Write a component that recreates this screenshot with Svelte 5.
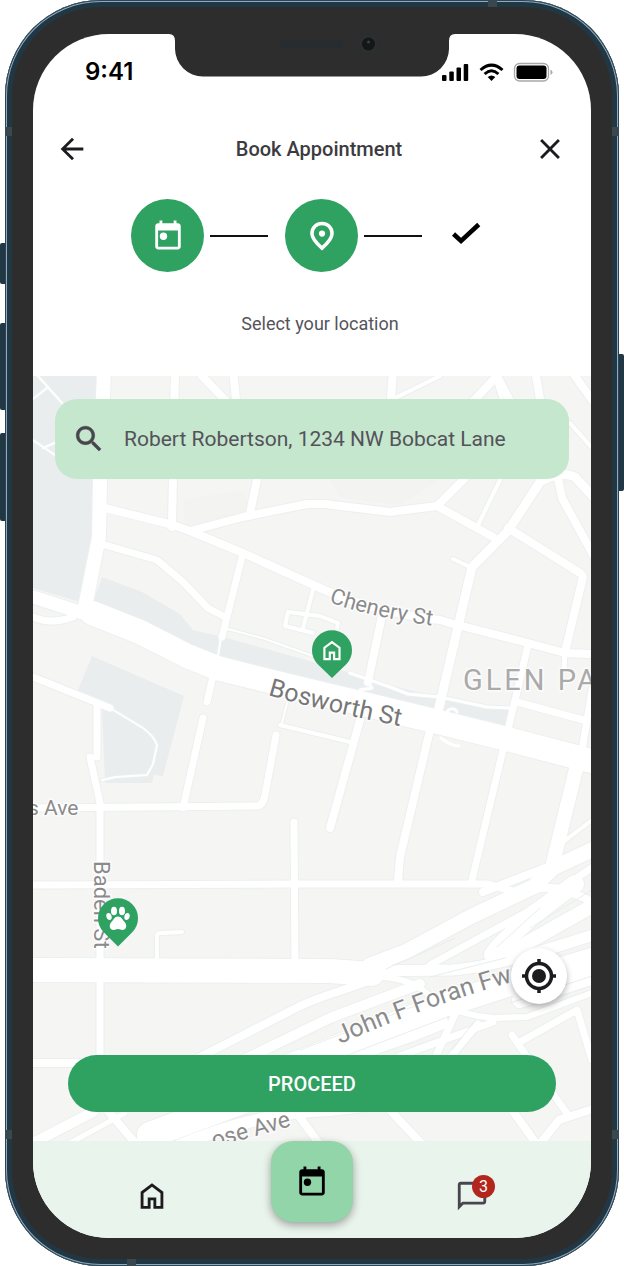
<script>
  const steps = [
    { id: 'date', label: 'Date', done: true },
    { id: 'place', label: 'Location', done: true },
    { id: 'confirm', label: 'Confirm', done: false }
  ];

  let address = $state('Robert Robertson, 1234 NW Bobcat Lane');

  // Parks and green strips, drawn beneath the streets.
  const parks = [
    'M33 376H97L93 530L80 602L33 588Z',
    'M102 577L142 592L180 614L193 630L227 638L313 662L350 673L390 685L440 698L487 708L512 709L507 730L430 716L297 686L217 665L140 630L92 606Z',
    'M92 656L184 696L163 776L154 775L152 783H105L102 707L78 690Z'
  ];

  // Street centre lines with their widths.
  const roads = [
    { w: 2, d: 'M38 376L62 403M47 388L33 399M33 440L55 455M43 448L57 442' },
    { w: 2, d: 'M221 637L217 662M228 629L262 638L313 656M287 703L282 723' },
    { w: 2, d: 'M110 708L143 728Q154 736 157 745L153 764L147 775L116 777L102 780' },
    { w: 3, d: 'M350 673L390 687L408 694L440 697L487 707L512 708M368 682L372 688L360 690L364 696' },
    { w: 4, d: 'M313 590L303 628M288 612L285 626L313 633M288 612L320 616L338 623L336 634' },
    { w: 4, d: 'M395 398L440 376M495 378L502 400M570 423L592 448M500 480L478 525M453 559L470 567' },
    { w: 4, d: 'M280 725L350 742M157 964V936Q157 933 161 933L182 932' },
    { w: 14, d: 'M104 370L100 480L99 537L85 607' },
    { w: 13, d: 'M33 597L92 616' },
    { w: 7, d: 'M33 617Q50 625 73 617' },
    { w: 24, d: 'M92 613L140 632L187 656L217 668L297 688L430 720L507 739L595 762' },
    { w: 8, d: 'M175 370L172 527M202 376L227 402M233 370L236 400M257 480L250 513' },
    { w: 8, d: 'M105 508L173 525L190 531L243 553L320 588Q372 612 440 620L450 623L528 643L565 653L592 654' },
    { w: 8, d: 'M190 531L243 517L307 504H325L390 512L437 506L493 537M437 506L463 480L520 420L497 376L463 412' },
    { w: 7, d: 'M105 545L157 560L183 582L208 608L225 617M242 557L222 637' },
    { w: 8, d: 'M393 370L391 399M535 370L540 399M575 376L592 400' },
    { w: 9, d: 'M596 500L575 477Q560 470 540 482L523 508L507 532L472 567L438 712' },
    { w: 8, d: 'M558 478L562 498L596 560M508 528L580 573Q584 576 582 581L565 652' },
    { w: 5, d: 'M565 650L564 670' },
    { w: 8, d: 'M382 616L368 682M360 720L330 828M430 730L400 857L398 882' },
    { w: 7, d: 'M503 750L472 880M528 645L508 730M517 702L587 721M592 690L582 750' },
    { w: 14, d: 'M577 765L553 863' },
    { w: 7, d: 'M213 676L207 702M203 718L183 808M276 735L265 795Q263 806 256 806L33 808' },
    { w: 7, d: 'M33 677L110 708M97 707V757M90 757L100 803V1060M294 822L295 970' },
    { w: 7, d: 'M33 885L295 884H487L520 893' },
    { w: 8, d: 'M33 1063H92' },
    { w: 24, d: 'M33 970L330 971L372 974' },
    { w: 15, d: 'M370 965L405 952L470 917L533 887L553 868L600 846' },
    { w: 8, d: 'M483 892L545 868M533 890Q555 882 592 902' },
    { w: 4, d: 'M558 846L592 820' },
    { w: 7, d: 'M430 965L527 912L600 862' },
    { w: 18, d: 'M493 955Q500 942 553 900L575 884' },
    { w: 14, d: 'M500 958L596 904' },
    { w: 11, d: 'M360 971L453 970Q500 966 596 934' },
    { w: 8, d: 'M200 1057L300 1006Q318 998 340 991L380 977' },
    { w: 10, d: 'M235 1064L330 1018L420 984' },
    { w: 24, d: 'M290 1066L430 1010L510 984L600 958' },
    { w: 16, d: 'M330 1062L410 1034L440 1022M520 1000L600 974' },
    { w: 6, d: 'M372 976Q410 978 425 992Q450 1014 493 1018L527 1017L600 990' },
    { w: 7, d: 'M400 1056L493 1022M448 1060L478 1024M456 1012L436 1056' },
    { w: 7, d: 'M512 1035L527 1057L568 1115M520 1042L577 1010L592 1060' },
    { w: 8, d: 'M596 1108L559 1120L539 1145M505 1100L535 1142M385 1105L420 1142' },
    { w: 10, d: 'M33 1143L93 1112' },
    { w: 5, d: 'M70 1143L125 1113' },
    { w: 26, d: 'M150 1135L250 1098L320 1085' },
    { w: 12, d: 'M180 1145Q260 1112 330 1110L380 1104' },
    { w: 8, d: 'M108 1111L137 1145M293 1108L318 1142' }
  ];
</script>

{#snippet calendarIcon()}
  <svg class="icon" viewBox="0 0 24 24" aria-hidden="true">
    <path d="M5 21.5q-.8 0-1.400-.6T3 19.500V5q0-.8.6-1.400T5 3h1V1h2v2h8V1h2v2h1q.8 0 1.400.6T21 5v14.500q0 .8-.6 1.400t-1.400.6H5Zm0-2h14V8.200H5v11.300Z" />
    <circle cx="8.800" cy="12.200" r="2.600" />
  </svg>
{/snippet}

{#snippet homeShape()}
  <path d="M6 19h3v-6h6v6h3v-9l-6-4.500L6 10v9Zm-2 2V9l8-6 8 6v12h-7v-6h-2v6H4Z" />
{/snippet}

<div class="stage">
  <div class="phone">
    <span class="key left k1"></span>
    <span class="key left k2"></span>
    <span class="key left k3"></span>
    <span class="key right"></span>
    <span class="band b1"></span>
    <span class="band b2"></span>
    <span class="band b3"></span>
    <span class="band b4"></span>
    <span class="band flat b5"></span>
    <span class="band flat b6"></span>

    <main class="screen">
      <svg class="notch" viewBox="0 0 286 43" aria-hidden="true">
        <path d="M0-1H286V0Q280 0 280 7V15A28 28 0 0 1 252 42.500H34A28 28 0 0 1 6 15V7Q6 0 0 0Z" fill="#2d2d2d" />
        <rect x="111" y="6" width="63" height="8" rx="4" fill="#262c2f" />
        <circle cx="199.500" cy="10" r="10" fill="#2a2f31" />
        <circle cx="199.500" cy="10" r="6.500" fill="#151717" />
        <circle cx="199.500" cy="8" r="1.500" fill="#3c4143" />
      </svg>

      <div class="status">
        <span class="time">9:41</span>
        <svg class="signals" viewBox="0 0 111 20" aria-label="Signal, Wi-Fi and battery">
          <rect x="0" y="13" width="4.500" height="6" rx="1" />
          <rect x="7.300" y="9.500" width="4.500" height="9.500" rx="1" />
          <rect x="14.500" y="5.500" width="4.500" height="13.500" rx="1" />
          <rect x="21.700" y="2" width="4.500" height="17" rx="1" />
          <g fill="none" stroke="#000" stroke-width="3">
            <path d="M38.500 8Q49.500-1.800 60.500 8" />
            <path d="M42.600 12Q49.500 5.600 56.400 12" />
          </g>
          <path d="M45.700 15Q49.500 11.800 53.300 15L49.500 19Z" />
          <rect x="72.500" y="1.500" width="34" height="17.500" rx="5" fill="none" stroke="#a8a8a8" stroke-width="1.300" />
          <rect x="74.500" y="3.500" width="30" height="13.500" rx="3" />
          <path d="M108.500 7.500Q110.500 8.500 110.500 10.200T108.500 13Z" fill="#a8a8a8" />
        </svg>
      </div>

      <header class="bar">
        <button class="plain" aria-label="Back">
          <svg class="icon" viewBox="0 0 24 24"><path d="M20 11H7.830l5.590-5.590L12 4l-8 8 8 8 1.410-1.410L7.830 13H20z" /></svg>
        </button>
        <h1>Book Appointment</h1>
        <button class="plain" aria-label="Close">
          <svg class="icon" viewBox="0 0 24 24"><path d="M19 6.410 17.590 5 12 10.590 6.410 5 5 6.410 10.590 12 5 17.590 6.410 19 12 13.410 17.590 19 19 17.590 13.410 12z" /></svg>
        </button>
      </header>

      <ol class="steps">
        {#each steps as step (step.id)}
          <li class:done={step.done} aria-label={step.label}>
            <span class="dot">
              {#if step.id === 'date'}
                {@render calendarIcon()}
              {:else if step.id === 'place'}
                <svg class="icon" viewBox="0 0 24 24" aria-hidden="true">
                  <path d="M12 3.200C8.200 3.200 4.900 6 4.900 10.200c0 3 2.400 6.200 7.100 10.300 4.700-4.100 7.100-7.300 7.100-10.300C19.100 6 15.800 3.200 12 3.200Z" fill="none" stroke="currentColor" stroke-width="2.500" />
                  <circle cx="12" cy="10.300" r="2.200" />
                </svg>
              {:else}
                <svg class="icon" viewBox="0 0 24 24" aria-hidden="true">
                  <path d="M3.200 10.600L8.500 15.500L21 3.900" fill="none" stroke="currentColor" stroke-width="3.200" />
                </svg>
              {/if}
            </span>
          </li>
        {/each}
      </ol>
      <p class="caption">Select your location</p>

      <section class="map" aria-label="Map">
        <svg class="tiles" viewBox="33 376 558 765" preserveAspectRatio="xMidYMid slice">
          <defs>
            <path id="chenery" d="M329 602Q372 618 450 628" />
            <path id="bosworth" d="M268 695Q330 713 420 730" />
            <path id="foran" d="M340 1044Q430 1004 530 977" />
          </defs>
          <rect x="33" y="376" width="559" height="765" fill="#f5f5f4" />
          <path d="M183 500L243 490L250 512L185 526ZM330 480H440L400 505L340 498Z" fill="#f3f3f2" />
          {#each parks as d}
            <path {d} fill="#eaeded" />
          {/each}
          <g fill="none" stroke-linecap="round" stroke-linejoin="round">
            {#each roads as road}
              <path d={road.d} stroke="#ebf0ef" stroke-width={road.w + 2} />
            {/each}
            {#each roads as road}
              <path d={road.d} stroke="#fff" stroke-width={road.w} />
            {/each}
            <path d="M447 714a5 4 0 1 1 10 -2M441 738q10 8 18 8" stroke="#fff" stroke-width="3" />
            <path d="M386 969L455 938M497 947L540 908M430 977L505 958M300 1050L420 1004M340 1058L450 1016M510 1003L592 976M530 928L592 890M452 1050L474 1022" stroke="#e9eeed" stroke-width="1" />
          </g>
          <g class="streets">
            <text font-size="22"><textPath href="#chenery">Chenery St</textPath></text>
            <text class="main-street" font-size="25"><textPath href="#bosworth">Bosworth St</textPath></text>
            <text font-size="25"><textPath href="#foran">John F Foran Fw</textPath></text>
            <text font-size="21" x="28" y="815">s Ave</text>
            <text font-size="22" transform="translate(94 861) rotate(90)">Baden St</text>
            <text font-size="23" transform="translate(214 1148) rotate(-16)">ose Ave</text>
            <text class="district" font-size="29" x="463" y="690">GLEN PA</text>
          </g>
          <g transform="translate(332 650)">
            <path class="pin" d="M0 28L-14.500 14A20 20 0 1 1 14.500 14Z" />
            <g transform="translate(-13 -12.500) scale(1.080)" fill="#fff">{@render homeShape()}</g>
          </g>
          <g transform="translate(118 918)">
            <path class="pin" d="M0 28.500L-14.500 14A20 20 0 1 1 14.500 14Z" />
            <g fill="#fff">
              <ellipse cx="-4" cy="-7" rx="3" ry="4.300" />
              <ellipse cx="4" cy="-7" rx="3" ry="4.300" />
              <ellipse cx="-9" cy="-1.500" rx="2.600" ry="3.600" transform="rotate(-15 -9 -1.500)" />
              <ellipse cx="9" cy="-1.500" rx="2.600" ry="3.600" transform="rotate(15 9 -1.500)" />
              <path d="M0-1.500C3.500-1.500 4.500 2 7 4.500C9.500 7.500 8 12 4.500 12C2.500 12 2 11 0 11S-2.500 12-4.500 12C-8 12-9.500 7.500-7 4.500C-4.500 2-3.500-1.500 0-1.500Z" />
            </g>
          </g>
        </svg>

        <label class="search">
          <svg class="icon" viewBox="0 0 24 24" aria-hidden="true"><path d="M15.500 14h-.79l-.28-.27C15.410 12.590 16 11.110 16 9.500 16 5.910 13.090 3 9.500 3S3 5.910 3 9.500 5.910 16 9.500 16c1.610 0 3.090-.59 4.230-1.570l.27.28v.79l5 4.990L20.490 19l-4.990-5zm-6 0C7.010 14 5 11.990 5 9.500S7.010 5 9.500 5 14 7.010 14 9.500 11.990 14 9.500 14z" stroke="currentColor" stroke-width=".4" /></svg>
          <input type="text" aria-label="Your location" bind:value={address} />
        </label>

        <button class="locate" aria-label="Use my location">
          <svg class="icon" viewBox="0 0 34 34">
            <circle cx="17" cy="17" r="12.500" fill="none" stroke="currentColor" stroke-width="3.500" />
            <circle cx="17" cy="17" r="7" />
            <path d="M17 0V5M17 29V34M0 17H5M29 17H34" stroke="currentColor" stroke-width="3.500" />
          </svg>
        </button>

        <button class="proceed">PROCEED</button>
      </section>

      <nav class="tabs">
        <a href="#home" aria-label="Home"><svg class="icon" viewBox="0 0 24 24">{@render homeShape()}</svg></a>
        <a class="current" href="#appointments" aria-label="Appointments">{@render calendarIcon()}</a>
        <a class="chat" href="#messages" aria-label="Messages">
          <svg class="icon" viewBox="0 0 24 24"><path d="M20 2H4c-1.100 0-2 .9-2 2v18l4-4h14c1.100 0 2-.9 2-2V4c0-1.100-.9-2-2-2zm0 14H5.170L4 17.170V4h16v12z" /></svg>
          <span class="badge">3</span>
        </a>
      </nav>
    </main>
  </div>
</div>

<style>
  :global(body) {
    background: #fff;
  }

  .stage {
    padding: 0 5px;
    font-family: Roboto, 'Liberation Sans', sans-serif;
    color: #1c1b1f;
  }

  .phone {
    box-sizing: border-box;
    position: relative;
    display: flex;
    min-height: 100vh;
    padding: 34px 28px 28px;
    border-radius: 96px;
    background: #2d2d2d;
    box-shadow:
      inset 0 0 0 1px #2b4454,
      inset 0 0 0 2px #8fabbd,
      inset 0 0 0 7px #213744;
  }

  .key {
    position: absolute;
    width: 5px;
    background: #213744;
  }
  .key.left {
    left: -5px;
    border-radius: 2px 0 0 2px;
  }
  .key.right {
    right: -5px;
    top: 354px;
    height: 137px;
    border-radius: 0 2px 2px 0;
  }
  .k1 {
    top: 243px;
    height: 41px;
  }
  .k2 {
    top: 323px;
    height: 87px;
  }
  .k3 {
    top: 433px;
    height: 88px;
  }

  .band {
    position: absolute;
    width: 7px;
    height: 9px;
    background: #39474e;
  }
  .band.flat {
    width: 9px;
    height: 7px;
  }
  .b1,
  .b2 {
    top: 127px;
  }
  .b3,
  .b4 {
    bottom: 127px;
  }
  .b1,
  .b3 {
    left: 0;
  }
  .b2,
  .b4 {
    right: 0;
  }
  .b5 {
    top: 0;
    right: 122px;
  }
  .b6 {
    bottom: 0;
    left: 122px;
  }

  .screen {
    position: relative;
    flex: 1;
    min-width: 0;
    display: flex;
    flex-direction: column;
    overflow: hidden;
    border-radius: 76px;
    background: #fff;
  }

  .notch {
    position: absolute;
    top: 0;
    left: 50%;
    width: 286px;
    height: 43px;
    transform: translateX(-50%);
  }

  .icon {
    display: block;
    flex: none;
    width: 34px;
    height: 34px;
    fill: currentColor;
  }

  .status {
    display: flex;
    justify-content: space-between;
    align-items: center;
    height: 76px;
    padding: 0 38px 0 52px;
  }
  .time {
    font: 600 24px/28px Inter, sans-serif;
    color: #000;
  }
  .signals {
    width: 111px;
    height: 20px;
  }

  .bar {
    display: flex;
    justify-content: space-between;
    align-items: center;
    height: 78px;
    padding: 0 24px 0 22px;
  }
  .plain {
    padding: 0;
    border: 0;
    background: none;
    color: inherit;
  }
  h1 {
    margin: 0;
    padding-left: 16px;
    font-size: 20px;
    line-height: 28px;
    font-weight: 500;
    color: #3c3b3f;
  }

  .steps {
    display: flex;
    justify-content: center;
    margin: 0;
    padding: 11px 0 0;
    list-style: none;
    color: #000;
  }
  .steps li {
    display: flex;
    align-items: center;
  }
  .steps li + li::before {
    content: '';
    width: 58px;
    height: 2px;
    margin: 0 17px 0 6px;
    background: #111;
  }
  .dot {
    display: grid;
    place-items: center;
    width: 54px;
    height: 73px;
  }
  .done .dot {
    width: 73px;
    border-radius: 50%;
    background: #2fa161;
    color: #fff;
  }

  .caption {
    margin: 0;
    padding: 40px 0 40px 16px;
    font-size: 18px;
    line-height: 24px;
    text-align: center;
    color: #55545a;
  }

  .map {
    position: relative;
    flex: 1;
    display: flex;
    flex-direction: column;
    min-height: 420px;
    padding: 23px 22px 29px;
    box-sizing: border-box;
    overflow: hidden;
  }
  .tiles {
    position: absolute;
    inset: 0;
    width: 100%;
    height: 100%;
  }
  .streets text {
    fill: #8b8b8b;
    stroke: #fff;
    stroke-width: 3px;
    stroke-opacity: 0.7;
    paint-order: stroke;
  }
  .streets .main-street {
    fill: #777;
  }
  .streets .district {
    fill: #aaa;
    letter-spacing: 3px;
  }
  .pin {
    fill: #2fa161;
  }

  .search {
    position: relative;
    display: flex;
    align-items: center;
    gap: 18px;
    height: 80px;
    padding: 0 17px;
    border-radius: 22px;
    background: #c4e7ce;
    color: #49454f;
  }
  .search input {
    flex: 1;
    min-width: 0;
    padding: 0;
    border: 0;
    outline: 0;
    background: none;
    font: 400 21px/28px Roboto, sans-serif;
    color: #55525a;
  }

  .locate {
    position: relative;
    display: grid;
    place-items: center;
    width: 56px;
    height: 56px;
    margin: auto 2px 51px auto;
    padding: 0;
    border: 0;
    border-radius: 50%;
    background: #fff;
    color: #1c1b1f;
    box-shadow: 0 3px 6px rgba(0, 0, 0, 0.3);
  }

  .proceed {
    position: relative;
    height: 57px;
    margin: 0 13px;
    border: 0;
    border-radius: 29px;
    background: #2fa161;
    color: #fff;
    font: 500 20px/28px Roboto, sans-serif;
  }

  .tabs {
    position: relative;
    display: grid;
    grid-template-columns: repeat(3, 1fr);
    justify-items: center;
    align-items: start;
    height: 97px;
    padding: 0 39px;
    background: #e9f4ec;
  }
  .tabs a {
    position: relative;
    padding-top: 38px;
    color: #1c1b1f;
  }
  .tabs .current {
    display: grid;
    place-items: center;
    width: 82px;
    height: 81px;
    padding: 0;
    border-radius: 22px;
    background: #92d5a9;
    color: #000;
    box-shadow: 0 3px 8px rgba(0, 0, 0, 0.35);
  }
  .tabs .chat {
    color: #49454f;
  }
  .badge {
    position: absolute;
    top: 34px;
    right: -6px;
    width: 23px;
    height: 23px;
    border-radius: 50%;
    background: #b3261e;
    color: #fff;
    font-size: 16px;
    line-height: 24px;
    text-align: center;
  }
</style>
